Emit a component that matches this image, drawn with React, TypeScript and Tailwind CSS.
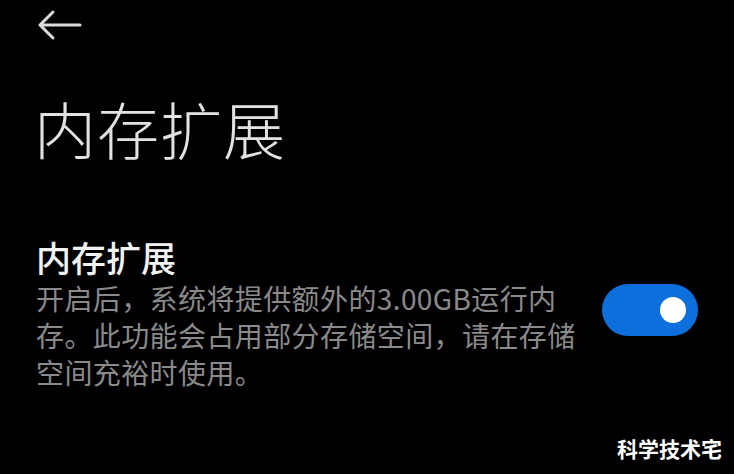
import React from "react";

const CJK = { fontFamily: '"Noto Sans CJK SC", "Noto Sans", sans-serif' };

function BackArrow() {
  return (
    <svg width="46" height="34" viewBox="0 0 46 34" fill="none">
      <path
        d="M3 17 H43 M3 17 L16 4 M3 17 L16 30"
        stroke="#dcdcdc"
        strokeWidth="3"
        strokeLinecap="round"
        strokeLinejoin="round"
      />
    </svg>
  );
}

function Toggle() {
  return (
    <div className="flex h-[52px] w-[96px] items-center justify-end rounded-full bg-[#0c6fdc] pr-[12px]">
      <div className="h-[26px] w-[26px] rounded-full bg-white" />
    </div>
  );
}

export default function App() {
  return (
    <div className="relative h-[474px] w-[734px] overflow-hidden bg-black" style={CJK}>
      <div className="pl-[37px] pt-[8px]">
        <BackArrow />
      </div>

      <h1 className="mt-[50px] pl-[34px] text-[62px] font-light leading-[72px] tracking-[1px] text-[#e2e2e2]">
        内存扩展
      </h1>

      <div className="mt-[69px] flex items-center justify-between pl-[36px] pr-[36px]">
        <div>
          <div className="text-[35px] font-medium leading-[47px] text-[#f2f2f2]">内存扩展</div>
          <div className="text-[28px] leading-[37px] tracking-[0.4px] text-[#8a8a8a]">
            <div>开启后，系统将提供额外的3.00GB运行内</div>
            <div>存。此功能会占用部分存储空间，请在存储</div>
            <div>空间充裕时使用。</div>
          </div>
        </div>
        <div className="mb-[4px]">
          <Toggle />
        </div>
      </div>

      <div className="absolute bottom-[12px] right-[12px] text-[21px] font-bold leading-[28px] text-white">
        科学技术宅
      </div>
    </div>
  );
}
